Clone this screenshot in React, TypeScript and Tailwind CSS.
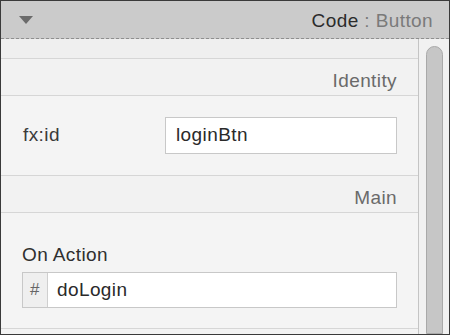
import React from 'react';

export default function App() {
  return (
    <div className="w-[450px] h-[335px] overflow-hidden bg-[#3a3a3a] p-px font-['Liberation_Sans',Arial,sans-serif] tracking-[0.4px]">
      <div className="w-full h-full flex flex-col bg-[#f3f3f3]">
        {/* Title bar */}
        <div className="h-[38px] shrink-0 flex items-center justify-between pl-[18px] pr-[16px] bg-[#cbcbcb] border-b border-dashed border-[#8f8f8f]">
          <svg width="14" height="8" viewBox="0 0 14 8">
            <path d="M0 0 H14 L7 8 Z" fill="#6b6b6b" />
          </svg>
          <div className="text-[19px] leading-none tracking-[0.4px] pt-[1px]">
            <span className="text-[#2b2b2b]">Code</span>
            <span className="text-[#7a7a7a]"> : Button</span>
          </div>
        </div>

        <div className="flex-1 flex min-h-0">
          {/* Properties */}
          <div className="flex-1 flex flex-col border-r border-[#c4c4c4]">
            <div className="h-[20px] shrink-0 bg-[#efefef] border-b border-[#d6d6d6]" />

            <div className="h-[37px] shrink-0 flex items-center justify-end pr-[21px] pt-[6px] bg-[#f2f2f2] border-b border-[#d6d6d6]">
              <span className="text-[19px] leading-none text-[#6a6a6a]">Identity</span>
            </div>

            <div className="h-[80px] shrink-0 flex items-center pl-[22px] pr-[21px] border-b border-[#d6d6d6] bg-[#f4f4f4]">
              <span className="text-[19px] text-[#3a3a3a] w-[142px]">fx:id</span>
              <div className="flex-1 h-[37px] flex items-center pl-[10px] bg-white border border-[#c8c8c8] text-[19px] text-[#2a2a2a]">
                loginBtn
              </div>
            </div>

            <div className="h-[37px] shrink-0 flex items-center justify-end pr-[21px] pt-[6px] bg-[#f2f2f2] border-b border-[#d6d6d6]">
              <span className="text-[19px] leading-none text-[#6a6a6a]">Main</span>
            </div>

            <div className="h-[116px] shrink-0 flex flex-col justify-end pl-[21px] pr-[21px] pb-[20px] bg-[#f4f4f4] border-b border-[#d6d6d6]">
              <span className="text-[19px] leading-none text-[#2f2f2f] mb-[8px]">On Action</span>
              <div className="h-[36px] flex border border-[#c8c8c8] bg-white">
                <div className="w-[25px] flex items-center justify-center bg-[#efefef] border-r border-[#cfcfcf] text-[17px] text-[#666]">
                  #
                </div>
                <div className="flex-1 flex items-center pl-[9px] text-[19px] text-[#2a2a2a]">doLogin</div>
              </div>
            </div>
          </div>

          {/* Scrollbar */}
          <div className="w-[30px] shrink-0 flex justify-center pt-[7px] bg-[#f1f1f1]">
            <div className="w-[17px] h-full rounded-t-[9px] bg-[#c6c6c6] border border-[#a9a9a9]" />
          </div>
        </div>
      </div>
    </div>
  );
}
